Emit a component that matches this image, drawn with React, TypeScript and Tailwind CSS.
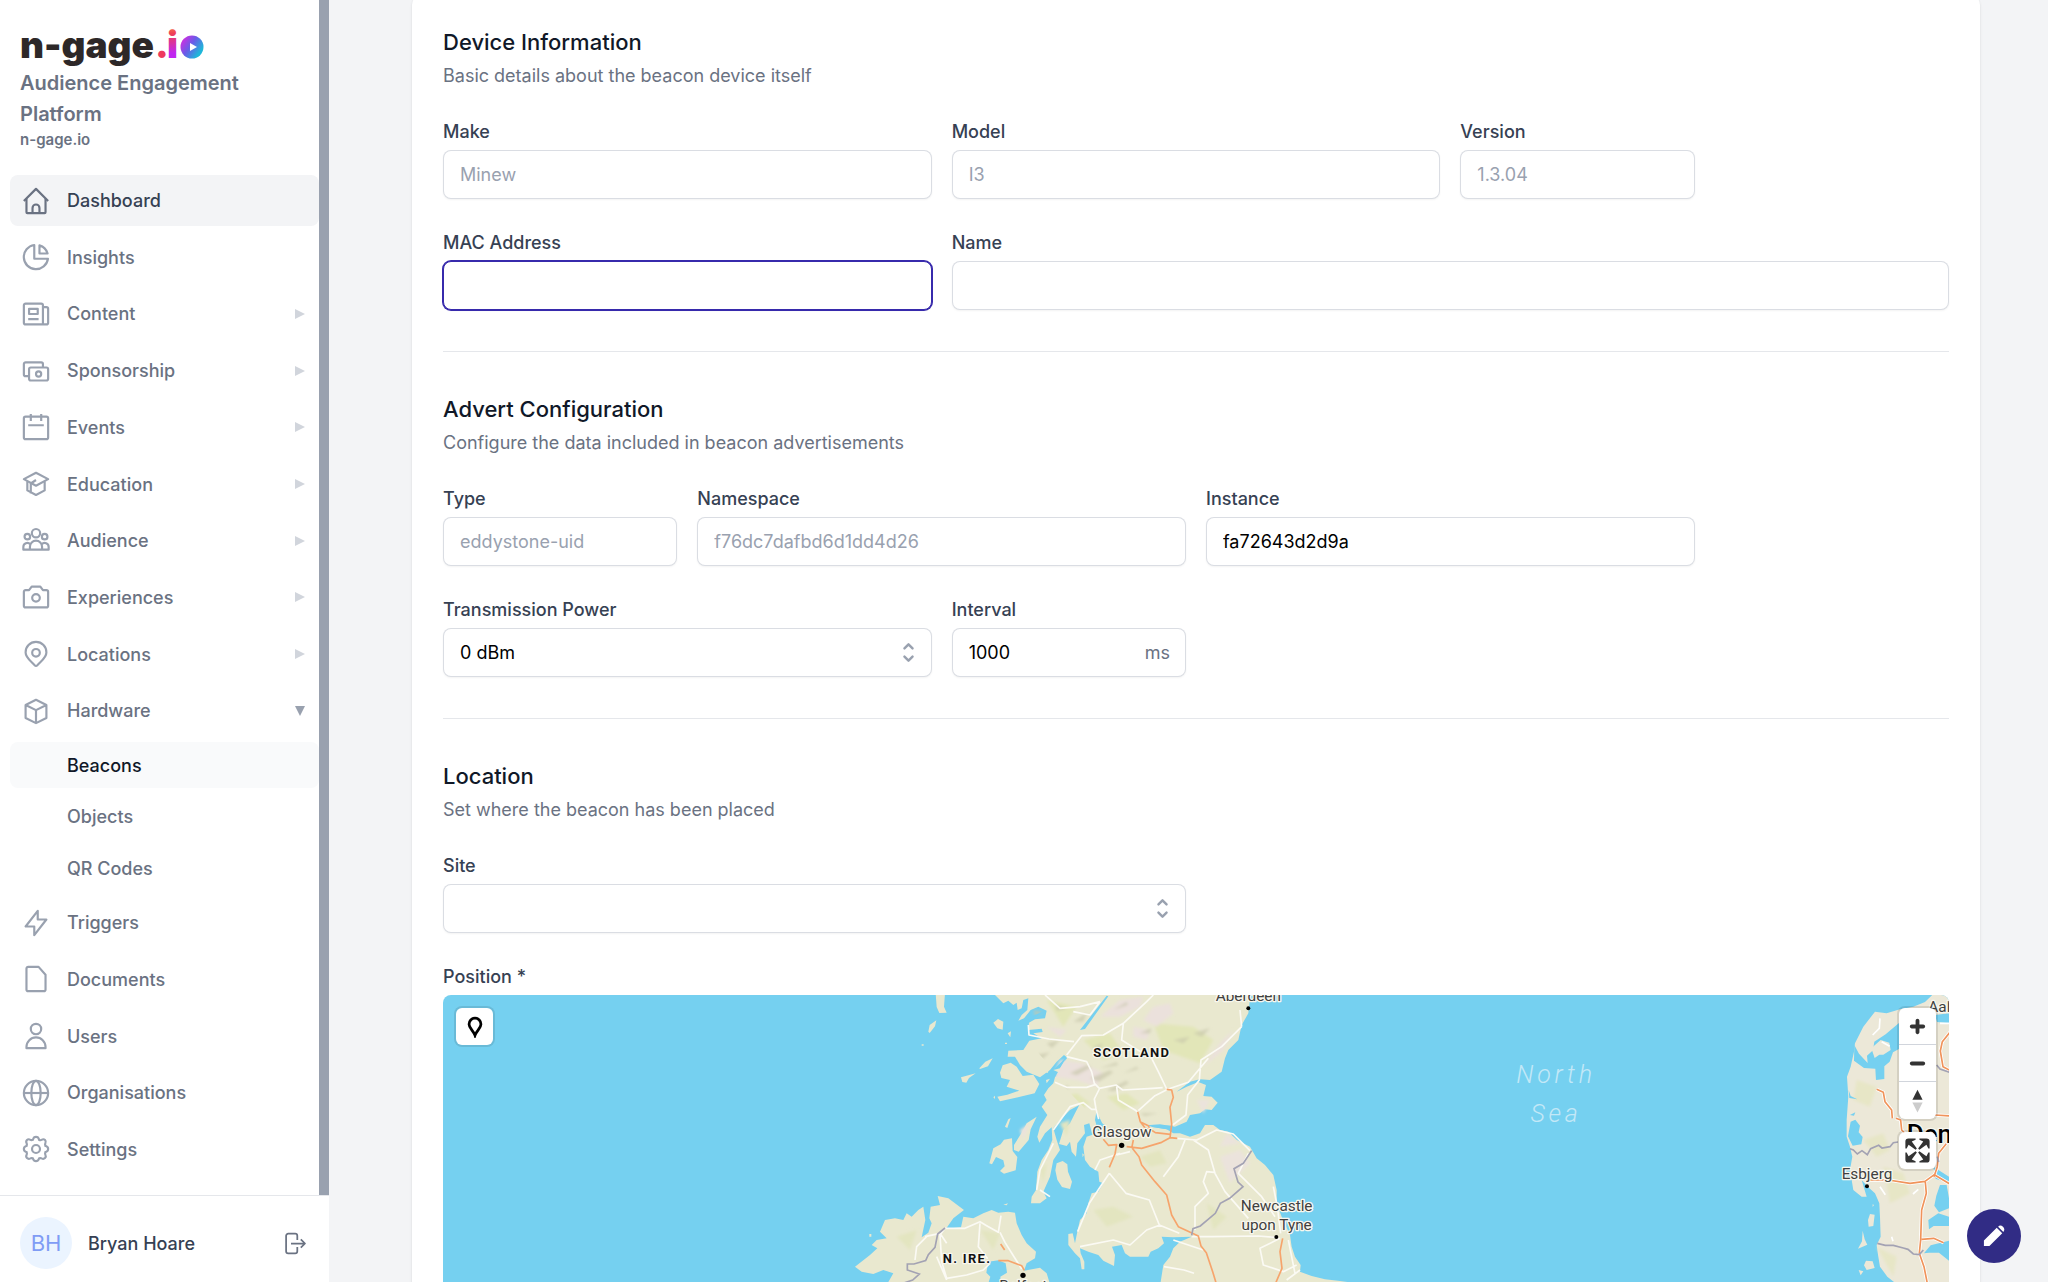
import { useState } from "react";
import type { ReactNode } from "react";

const icons: Record<string, ReactNode> = {
  home: (
    <>
      <path d="M.5 7.5l7-7 7 7" />
      <path d="M2 6v8a.5.5 0 00.5.5h10a.5.5 0 00.5-.5V6" />
      <path d="M5.5 14.5v-3a2 2 0 014 0v3" />
    </>
  ),
  pie: (
    <>
      <path d="M6.5.6a7 7 0 107.9 7.9H6.5V.6z" />
      <path d="M9.5.8v4.7h4.7A7 7 0 009.5.8z" />
    </>
  ),
  news: (
    <>
      <path d="M11.5 13.5h-10a1 1 0 01-1-1v-10a1 1 0 011-1h9a1 1 0 011 1v11zm0 0h2a1 1 0 001-1v-8a1 1 0 00-1-1h-2" />
      <path d="M3.5 4.5h5v3h-5zM3 10.5h6" />
    </>
  ),
  money: (
    <>
      <path d="M3.500 10.5h-2a1 1 0 01-1-1v-6a1 1 0 011-1h9a1 1 0 011 1v2" />
      <rect x="3.5" y="5.5" width="11" height="7.5" rx="1" />
      <circle cx="9" cy="9.2" r="1.5" />
    </>
  ),
  calendar: (
    <>
      <rect x=".5" y="1.5" width="14" height="13" rx="1" />
      <path d="M4.5 0v4M10.5 0v4M3 6.5h9" />
    </>
  ),
  education: (
    <>
      <path d="M.5 4.7L7.5 1l7 3.7-7 3.8-7-3.800z" />
      <path d="M2.500 6v5.2l5 2.600 5-2.600V6M4.500 13V7.200l3-2" />
    </>
  ),
  audience: (
    <>
      <circle cx="7.5" cy="3" r="2.4" />
      <circle cx="2.5" cy="5" r="1.6" />
      <circle cx="12.5" cy="5" r="1.6" />
      <path d="M4 12.5v-1.700a3.500 3.500 0 017 0v1.700H.2v-1.500a2.300 2.300 0 014-1.600M11 12.500h3.800v-1.500a2.300 2.300 0 00-4-1.600" />
    </>
  ),
  camera: (
    <>
      <path d="M.5 12.5v-8a1 1 0 011-1h2l1.500-2h5l1.500 2h2a1 1 0 011 1v8a1 1 0 01-1 1h-12a1 1 0 01-1-1z" />
      <circle cx="7.5" cy="8" r="2.2" />
    </>
  ),
  pin: (
    <>
      <path d="M7.5.5a6 6 0 00-6 6.200c0 3.300 3.600 5.200 5.300 7.400a.9.9 0 001.400 0c1.700-2.200 5.300-4.100 5.300-7.400a6 6 0 00-6-6.200z" />
      <circle cx="7.5" cy="6.8" r="2.2" />
    </>
  ),
  box: <path d="M7.5 7l-6-3m6 3l6-3m-6 3v7.5M1.500 4l6-3 6 3v7.500l-6 3-6-3V4z" />,
  bolt: <path d="M8.500 5.500v-5l-7 9h5v5l7-9h-5z" />,
  file: <path d="M2 1.500v12a1 1 0 001 1h9a1 1 0 001-1V5L9 .5H3a1 1 0 00-1 1z" />,
  user: (
    <>
      <circle cx="7.5" cy="3.5" r="3" />
      <path d="M2 14.5v-.7a5.500 5.500 0 0111 0v.7H2z" />
    </>
  ),
  globe: (
    <>
      <circle cx="7.5" cy="7.5" r="7" />
      <ellipse cx="7.5" cy="7.5" rx="2.7" ry="7" />
      <path d="M.5 7.5h14" />
    </>
  ),
  cog: (
    <>
      <path d="M6 1.400C6.200.8 6.700.5 7.500.5s1.300.3 1.500.9l.3.9c.6.2 1 .3 1.400-.1 1-.6 1.500-.4 2 .1s.7 1 .2 1.900c-.3.6-.2.9 0 1.500.7.3 1.600.4 1.600 1.800s-.8 1.500-1.600 1.800c-.2.6-.3 1 0 1.500.5.9.3 1.400-.2 1.900s-1 .7-2 .2c-.5-.3-.8-.2-1.400 0-.3.7-.4 1.600-1.800 1.600s-1.500-.8-1.800-1.600c-.6-.2-.9-.3-1.400 0-1 .5-1.500.3-2-.2s-.7-1-.2-1.900c.3-.5.2-.9 0-1.500C1.300 9 .5 8.900.5 7.500S1.300 6 2.100 5.700c.2-.6.3-.9 0-1.500-.5-.9-.3-1.400.2-1.900s1-.7 2-.1c.5.3.8.2 1.400 0z" />
      <circle cx="7.5" cy="7.5" r="2.3" />
    </>
  ),
  logout: (
    <path d="M9.5 5V2A1.500 1.500 0 008 .5H3A1.500 1.500 0 001.500 2v11A1.500 1.500 0 003 14.500h5A1.500 1.500 0 009.500 13v-3M5 7.500h10M12 4.500l3 3-3 3" />
  ),
};

const Icon = ({ name, className }: { name: string; className: string }) => (
  <svg
    viewBox="0 0 15 15"
    fill="none"
    stroke="currentColor"
    strokeWidth="1.25"
    strokeLinejoin="round"
    className={`shrink-0 overflow-visible ${className}`}
    aria-hidden="true"
  >
    {icons[name]}
  </svg>
);

const menu = [
  { label: "Dashboard", icon: "home", active: true },
  { label: "Insights", icon: "pie" },
  { label: "Content", icon: "news", more: true },
  { label: "Sponsorship", icon: "money", more: true },
  { label: "Events", icon: "calendar", more: true },
  { label: "Education", icon: "education", more: true },
  { label: "Audience", icon: "audience", more: true },
  { label: "Experiences", icon: "camera", more: true },
  { label: "Locations", icon: "pin", more: true },
  { label: "Hardware", icon: "box", open: true },
  { label: "Beacons", sub: true, active: true },
  { label: "Objects", sub: true },
  { label: "QR Codes", sub: true },
  { label: "Triggers", icon: "bolt" },
  { label: "Documents", icon: "file" },
  { label: "Users", icon: "user" },
  { label: "Organisations", icon: "globe" },
  { label: "Settings", icon: "cog" },
];

const Logo = () => (
  <svg viewBox="0 0 186 48" className="block h-[48px] w-[186px] overflow-visible" role="img" aria-label="n-gage.io">
    <defs>
      <linearGradient id="logoI" x1="0" y1="0" x2="0.3" y2="1">
        <stop offset="0.2" stopColor="#fbb040" />
        <stop offset="0.5" stopColor="#ef4056" />
        <stop offset="0.9" stopColor="#c026f0" />
      </linearGradient>
      <linearGradient id="logoO" x1="0" y1="0" x2="1" y2="0.7">
        <stop offset="0.1" stopColor="#d62be0" />
        <stop offset="0.5" stopColor="#6a5be8" />
        <stop offset="0.9" stopColor="#1fb6d9" />
      </linearGradient>
    </defs>
    <text y="38" fontSize="37" className="font-['Inter'] font-black">
      <tspan x="0" fill="#2d2828">n-gage</tspan>
      <tspan x="135" fill="#ee3a5f">.</tspan>
      <tspan x="147" fill="url(#logoI)">i</tspan>
    </text>
    <circle cx="172" cy="27" r="11.5" fill="url(#logoO)" />
    <path d="M170 23l7 4-7 4z" fill="#fff" />
  </svg>
);

const Sidebar = () => (
  <aside className="flex h-full w-[329px] shrink-0 flex-col bg-white">
    <div className="flex min-h-0 flex-1">
      <div className="flex min-w-0 flex-1 flex-col py-5">
        <div className="flex flex-col px-5 pb-[25px]">
          <Logo />
          <span className="text-[20px] leading-[31px] font-semibold text-gray-500">Audience Engagement Platform</span>
          <span className="text-[15px] leading-5 font-semibold text-gray-500">n-gage.io</span>
        </div>
        {/* MENU */}
        <nav className="flex min-h-0 flex-1 flex-col justify-between pl-[10px]">
          {menu.map((item) =>
            item.sub ? (
              <a
                key={item.label}
                href="#"
                className={`flex h-[46px] items-center rounded-lg pl-[57px] text-[18px] font-medium ${
                  item.active ? "bg-gray-50 text-gray-900" : "text-gray-500"
                }`}
              >
                {item.label}
              </a>
            ) : (
              <a
                key={item.label}
                href="#"
                className={`flex h-[51px] items-center gap-[18px] rounded-lg pl-[13px] pr-[14px] text-[18px] font-medium ${
                  item.active ? "bg-gray-100 text-gray-700" : "text-gray-500"
                }`}
              >
                <Icon name={item.icon!} className={`size-[26px] ${item.active ? "text-gray-500" : "text-gray-400"}`} />
                <span className="flex-1">{item.label}</span>
                {item.more && (
                  <svg viewBox="0 0 10 10" className="size-[10px] fill-gray-300" aria-hidden="true">
                    <path d="M0 0l10 5-10 5z" />
                  </svg>
                )}
                {item.open && (
                  <svg viewBox="0 0 10 10" className="size-[10px] fill-gray-400" aria-hidden="true">
                    <path d="M0 0h10L5 10z" />
                  </svg>
                )}
              </a>
            ),
          )}
        </nav>
      </div>
      <div className="w-[10px] shrink-0 bg-gray-400" />
    </div>
    {/* USER */}
    <div className="flex h-[87px] shrink-0 items-start border-t border-gray-200 px-5 pt-[21px]">
      <div className="flex size-[52px] items-center justify-center rounded-full bg-[#ebf4ff] text-[22px] text-[#7f9cf5]">
        BH
      </div>
      <div className="ml-4 flex h-[52px] flex-1 items-center justify-between">
        <span className="text-[18px] font-medium text-gray-700">Bryan Hoare</span>
        <button type="button" aria-label="Log out" className="mr-1 text-gray-500">
          <Icon name="logout" className="size-[21px]" />
        </button>
      </div>
    </div>
  </aside>
);

const inputClass =
  "h-[49px] w-full rounded-lg border border-gray-300/80 bg-white px-4 text-[18px] text-black shadow-xs outline-none placeholder:text-gray-400";

type FieldProps = { id: string; label: string; span: string; children: ReactNode };

const Field = ({ id, label, span, children }: FieldProps) => (
  <div className={`flex flex-col gap-[5px] ${span}`}>
    <label htmlFor={id} className="text-[18px] leading-[26px] font-medium text-gray-700">
      {label}
    </label>
    {children}
  </div>
);

const Select = ({ id, options }: { id: string; options: string[] }) => (
  <div className="relative">
    <select id={id} className={`${inputClass} appearance-none`}>
      {options.map((option) => (
        <option key={option}>{option}</option>
      ))}
    </select>
    <svg
      viewBox="0 0 20 20"
      fill="none"
      stroke="currentColor"
      strokeWidth="1.8"
      strokeLinecap="round"
      strokeLinejoin="round"
      className="pointer-events-none absolute right-[10px] top-[11px] size-[27px] text-gray-400"
      aria-hidden="true"
    >
      <path d="M7 7l3-3 3 3m0 6l-3 3-3-3" />
    </svg>
  </div>
);

type SectionProps = { title: string; text: string; children: ReactNode };

const Section = ({ title, text, children }: SectionProps) => (
  <section className="border-b border-gray-200 py-[41px] first:pt-0 last:border-b-0">
    <h3 className="text-[22px] leading-[33px] font-medium text-gray-900">{title}</h3>
    <p className="mt-1 text-[18px] leading-[26px] text-gray-500">{text}</p>
    <div className="mt-[30px] grid grid-cols-6 gap-x-5 gap-y-[31px]">{children}</div>
  </section>
);

const MapArt = () => (
  <svg viewBox="0 0 1506 480" preserveAspectRatio="xMaxYMin slice" className="block h-full w-full bg-[#75d0f0]">
    <defs>
      <filter id="soft" x="-20%" y="-20%" width="140%" height="140%">
        <feGaussianBlur stdDeviation="5" />
      </filter>
      <clipPath id="mainland">
        <path d="M460 0L490 40 520 45 545 92 620 60 565 98 565 155 640 240 680 200 645 262 730 350 780 425 1000 430 1080 268 1155 205 1205 105 1235 0z" />
      </clipPath>
    </defs>
    {/* BRITISH ISLES */}
    <g transform="scale(0.33333) translate(1191 -15)">
      <g fill="#e9e8cf">
        <path d="M460 10L490 40 505 32 520 45 530 38 533 60 545 55 550 30 565 25 562 60 545 75 535 92 552 85 572 60 595 50 620 62 615 85 585 88 567 98 565 120 605 116 608 126 580 130 605 145 568 152 550 180 505 182 503 200 525 200 540 225 560 245 600 262 630 240 650 215 672 195 682 203 660 235 640 240 662 250 645 262 640 280 625 295 612 315 620 330 605 350 622 375 600 410 592 440 598 458 615 430 635 412 637 450 625 480 605 510 592 545 588 600 575 620 573 640 600 640 620 625 610 605 630 560 640 510 660 480 650 450 640 415 660 390 690 360 718 345 705 370 690 400 670 420 657 462 680 468 690 455 695 485 708 500 712 460 735 430 732 405 748 400 756 430 775 425 765 390 770 360 778 395 795 405 785 425 740 440 730 470 735 510 750 530 775 545 778 575 790 580 775 605 755 610 745 640 740 670 720 690 712 725 705 760 698 730 685 732 685 765 705 790 720 805 725 838 733 838 733 815 722 790 720 775 745 785 775 795 790 812 822 828 825 795 816 770 845 765 855 790 870 800 925 800 932 785 955 775 972 760 965 740 1000 742 1055 740 1020 755 1000 775 990 800 970 825 962 876 940 1400 2200 1400 1700 900 1500 873 1455 868 1415 858 1380 845 1382 825 1365 800 1355 770 1350 735 1325 680 1310 640 1310 600 1300 555 1275 525 1250 505 1230 470 1190 450 1165 425 1140 420 1120 405 1095 405 1080 430 1050 440 1020 430 1000 430 980 418 940 412 920 406 960 403 1005 410 1040 395 1050 375 1080 370 1095 358 1115 360 1133 338 1115 320 1090 318 1098 285 1075 276 1040 290 1010 305 1050 275 1080 268 1110 270 1145 245 1155 205 1165 180 1195 150 1205 105 1225 70 1232 10z" />
        <path d="M45 830L90 795 112 775 95 765 110 750 140 745 120 725 135 690 165 685 190 690 200 670 215 680 235 660 250 650 256 690 245 742 265 728 275 700 268 685 272 650 300 645 293 618 325 625 372 660 340 685 318 716 363 712 370 680 400 685 430 670 455 660 475 668 505 665 525 668 530 700 545 735 560 760 588 785 585 805 560 820 552 842 600 833 620 850 628 876 640 1400-100 1400 145 876 160 850 130 840 100 852 65 845z" />
        <path d="M650 520l18-7 14 10 2 22 12 30-6 22-24-6-14-22-6-28zM448 520l12-45 22-12 10-14 24-4 2 38 14 18-5 40-35 10-12-8 14-14-4-18-22-10-12 22zM522 465l22-35 16-30 30-20-18 38-6 32-30 35-14-5zM480 248l8-22 24-8 18 12 18 28 32-4 18 28-14 28-50 12-54 12-8-14 30-6 36-12-38-12 10-20-26-6zM495 410l10-22 7-4-10 30zM363 262l22-6 22-6-20 14-8 14-12-2zM418 235l18-20 22-10-14 24-24 8zM287 10h28l-3 40 8 18-22 1-8-18zM265 125l4-20 20-14-4 18-16 20zM460 98l14-11 16 8-2 24-16-4zM503 130l10-6-2 18zM495 158h6v4h-6zM245 163h6v4h-6zM618 270l12-4-10 14zM618 248l8-10-2 10zM460 322l5-5v10zM490 644l14-4-4 6zM727 490l5 4-4 8zM88 732h6v8h-6z" />
      </g>
      {/* HILLS */}
      <g clipPath="url(#mainland)" filter="url(#soft)">
        <path d="M620 30l90 20-40 60zM730 150l80-20 40 60-60 20zM940 100l120 10 60 40-40 70-110-40zM650 330l60-20 40 30-60 40zM800 320l60-10 40 30-50 20z" fill="#e2e6b8" />
        <path d="M660 210l70 10 60 30-20 40-60-20-70-10zM780 80l60-50 70-10-10 30-60 30zM910 90l30-40 50-10 10 30-50 40zM880 110l50 10-10 30-40-10zM1090 230l60-50 30-60-40 40zM620 110l60 10-20 20z" fill="#ebe1dc" />
        <path d="M690 250l50-24 14 6-44 24zM750 265l60-24 10 6-44 28zM800 300l60-28 6 8-44 24zM780 235l50-18 4 8zM850 250l40-20 6 6zM645 45l36 10-30 8zM580 60l30 6-24 14zM700 95l40-26-10 26zM620 160l40-10-24 24zM900 130l34-16-4 16zM1000 150l50-10-20 20zM1060 130l50-16-24 26zM760 170l30-10-10 16zM900 370h54l-40 8zM590 195l40-8-24 20zM820 60l40-24 4 8zM660 300l24-14 4 8z" fill="#c9c7ab" opacity=".7" />
      </g>
      <g fill="#e3e5c0" filter="url(#soft)">
        <path d="M900 500l60-20 20 40-50 10zM760 660l60-10 60 30-80 30zM1100 640l60 40-40 40zM170 740l60-20-20 60zM420 720l60 10-20 50zM660 400l30-10-10 50zM600 540l20-20-10 60z" />
        <path d="M1140 500l60-20 30 40-60 60zM1070 330l40 0-20 40zM1160 430l40 30-60 10zM540 420l30-20-20 50z" fill="#ebe3dc" />
      </g>
      <path d="M445 815l30-4 22 9 4 28-20 12 2 20-38 0 6-20-12-12zM720 120l80-103 5 2-70 98zM775 375l14 30-10 2zM940 405l60 2-10 12-50-8z" fill="#75d0f0" />
      {/* ROADS */}
      <g fill="none" stroke="#fbfaf4" strokeWidth="5" strokeLinejoin="round">
        <path d="M565 105l2 30 60 12 75 8M780 35l-60 15-60 5-45-40M780 35l-30 40-50-10M680 195l45-58 65-2 60-35 70-65 20-20M850 100l-5 50 40 25 50 30 20 40 25 52M680 200l60 15 15 30 8 35 15 15 50-10 20 15 90-5 30-2M645 277l35 15 60 0 25-8M778 297l-15 30 5 30 8 30M830 290l5 40 50 30 10 8M895 362l50-45 40-20M985 297l60-20 60-72M1205 110l-60 60-62 40-5 60-35 45-5 60-40 30M1200 60l5 50M640 420l50-70 40-12 25 20 12 0M1010 445l60 5 60-30 50 12 50 50M1060 450l45 30 20 70 30 55 70 80M970 560l45-60 20-50M1225 490l-30 60 70 70 40 60M1300 590l12 60 10 80M840 490l-60 20-15 30M870 485l-40 10M808 550l50 60 70 20 30 75 60 25M808 550l-60 90-35 85M960 705l-40 15-50 45-50-15-100 20M1055 740l60 0 140-2 60 5M1065 720l0-70 40-40-15-35 10-30 22 2M1090 780l-90-30M972 830l60 10 30 10M315 715l60 0 45-20 20 12 35 20 8-50M420 700l-5 70 28 36M260 740l-30 30-5 40M300 730l-45 10M300 730l20 30M315 715l-15 20 5 80 15 50 60-10 50-15 20-20M480 727l15 30 50 80M290 800l30 70M1320 745l-60 30 10 50 60 20 40-20M1345 750l10 50 10 50M600 600l30 20M1340 870l40-30M590 600l10-60 40-80" />
      </g>
      <g fill="none" stroke="#f6a46c" strokeWidth="5" strokeLinejoin="round">
        <path d="M980 298l15 2 5 22-10 30 5 50-5 42M893 365l8 30 15 20 18 5 12 8 45 5M900 395l25 12 8 16M790 448l15 18 25-2-5 28-17 40M860 470l45 5 60-18 25-14 22 2M875 475l5-25M877 475l20 25 8 25 40 50 35 40 15 60 20 35 60 28 8 30 16 20 20 60 15 50M475 812l30 0 40 15 8 14M482 762l12 18M1328 745l-8 40 6 50-18 42" />
      </g>
      <g fill="none" stroke="#a3a2b3" strokeWidth="5">
        <path d="M1235 482l-25 38-28 16 12 40 15 14-40 35-28 15-15 30-45 38-22 8-4 20M315 714l-22 18-8 40-20 22-8 18-35 10-20 0 0 18 36 12-20 18-35 12" />
      </g>
      <g
        className="font-['Roboto']"
        fill="#404040"
        stroke="#f8f7ee"
        strokeWidth="8"
        paintOrder="stroke"
        strokeLinejoin="round"
        textAnchor="middle"
        fontSize="46"
      >
        <text x="1225" y="34">Aberdeen</text>
        <text x="846" y="442">Glasgow</text>
        <text x="1310" y="664">Newcastle</text>
        <text x="1310" y="720">upon Tyne</text>
        <text x="550" y="902">Belfast</text>
        <g className="font-bold tracking-widest" fill="#111" fontSize="39">
          <text x="875" y="201">SCOTLAND</text>
          <text x="381" y="818">N. IRE.</text>
        </g>
      </g>
      <circle cx="1225" cy="55" r="6" />
      <circle cx="845" cy="466" r="8" />
      <circle cx="1309" cy="741" r="6" />
      <circle cx="549" cy="856" r="8" />
    </g>
    <g
      className="font-['Roboto'] font-light tracking-[0.15em] italic"
      fill="#c3e8f7"
      fontSize="25"
      textAnchor="middle"
    >
      <text x="1113" y="88">North</text>
      <text x="1113" y="127">Sea</text>
    </g>
    {/* DENMARK */}
    <g transform="scale(0.33333) translate(4071 -45)">
      <path d="M402 40L600 40 600 1400 300 1400 282 906 262 890 240 860 235 830 230 795 242 770 240 710 238 670 225 640 205 622 185 600 200 650 185 650 160 630 150 570 157 530 150 500 140 470 140 420 145 350 141 290 152 260 162 215 165 190 190 140 225 95 260 100 300 88 340 80 375 66z" fill="#ece8d8" />
      <path d="M170 300l60 20-20 60-50-20zM190 480l60-20 20 50-40 20zM250 560l60 20 20 60-60 30zM230 800l60 30-10 60z" fill="#e7e6c6" filter="url(#soft)" />
      <path d="M163 195l14 26 26 28-2-22 18-16 4-26 34-22 40-34 12 16-8 60-22 12-10 28-16 14 0 38-25 3-2-34-34-2-30-22zM152 425l14-6 14 18-4 20 12 14-4 22-26 4-14-28zM146 330l6 18 20 10-24-4zM150 405l16-8-4 10zM405 105l42-5v30l-36-4zM400 560l47 30v20l-40-14zM420 615l20 0 7 40v30l-30 12-14-20 6-30zM385 720l30-20 32 10v28l-46 0-14 10zM372 820l20-24 55-14v60l-30-24-30 0z" fill="#75d0f0" />
      <path d="M214 205l28-25 26 8 4 22-22 14-12 0-14 10zM210 702l14 2-4 34-14 2-2-20zM188 752l6 26 8 16-28 12 12-22zM198 842l20 2 6 20-24 6-8-14zM176 870l14 4-8 12zM222 675l-4 6 0-8z" fill="#ece8d8" />
      <path d="M240 115l-2 30-20 20M245 185l24 14M240 620l16 24M355 628l-16 14M275 770l4 14M420 130l27 0" fill="none" stroke="#fff" strokeWidth="5" />
      <path
        d="M230 328l20 9 5 28 20 25 2 25M288 415l14 5 3 30 16 16M405 405l50 3M205 600l60 0 65 10 45-6 28-20 50 30M376 606l3 34-14 50-3 90-4 40 14 40 12 60M455 150l-28 35-6 28 8 47 26 14M365 778l36-3 30 13M440 490l-24 30-4 40-10 30"
        fill="none"
        stroke="#fff"
        strokeWidth="10"
      />
      <path
        d="M230 328l20 9 5 28 20 25 2 25M288 415l14 5 3 30 16 16M405 405l50 3M205 600l60 0 65 10 45-6 28-20 50 30M376 606l3 34-14 50-3 90-4 40 14 40 12 60M455 150l-28 35-6 28 8 47 26 14M365 778l36-3 30 13M440 490l-24 30-4 40-10 30"
        fill="none"
        stroke="#f0935a"
        strokeWidth="5"
        strokeLinejoin="round"
      />
      <path d="M150 506l10 4 12 12 14-10 16 12 10-18 24-10 10 8 24-4 10-12 14-2M410 255l10 12 30 10M412 530l4 16M232 790l24 6 24 0 30 8 14 4 16 14 18 2 12-14" fill="none" stroke="#a3a2b3" strokeWidth="5" />
      <g
        className="font-['Roboto']"
        fill="#404040"
        stroke="#f8f7ee"
        strokeWidth="8"
        paintOrder="stroke"
        strokeLinejoin="round"
        fontSize="46"
      >
        <text x="385" y="97">Aalborg</text>
        <text x="125" y="598">Esbjerg</text>
        <text x="320" y="490" fontSize="78" fill="#000" className="font-medium">
          Denmark
        </text>
      </g>
      <circle cx="201" cy="619" r="6" />
    </g>
  </svg>
);

const controlPaths: Record<string, string> = {
  "Zoom in":
    "M14.5 8.5c-.75 0-1.500.75-1.500 1.500v3h-3c-.75 0-1.500.75-1.500 1.500S9.250 16 10 16h3v3c0 .75.75 1.500 1.500 1.500S16 19.750 16 19v-3h3c.75 0 1.500-.75 1.500-1.500S19.750 13 19 13h-3v-3c0-.75-.75-1.500-1.500-1.500z",
  "Zoom out": "M10 13c-.75 0-1.500.75-1.500 1.500S9.250 16 10 16h9c.75 0 1.500-.75 1.500-1.500S19.750 13 19 13h-9z",
  "Reset bearing": "M10.5 14l4-8 4 8h-8z",
  "Enter fullscreen":
    "M24 16v5.500c0 1.750-.75 2.500-2.500 2.500H16v-1l3-1.500-4-5.500 1-1 5.500 4 1.500-3h1zM6 16l1.500 3 5.500-4 1 1-4 5.500 3 1.500v1H7.500C5.750 24 5 23.250 5 21.500V16h1zm7-11v1l-3 1.500 4 5.500-1 1-5.500-4L6 13H5V7.500C5 5.750 5.750 5 7.500 5H13zm11 2.500c0-1.750-.75-2.500-2.500-2.500H16v1l3 1.500-4 5.500 1 1 5.500-4 1.500 3h1V7.500z",
};

const MapButton = ({ name }: { name: string }) => (
  <button type="button" aria-label={name} className="flex size-[37px] items-center justify-center">
    <svg viewBox="0 0 29 29" className="size-[37px] fill-[#333]" aria-hidden="true">
      <path d={controlPaths[name]} />
      {name === "Reset bearing" && <path d="M10.5 16l4 8 4-8h-8z" fill="#ccc" />}
    </svg>
  </button>
);

const PositionMap = () => (
  <div className="relative h-[480px] overflow-hidden rounded-lg">
    <MapArt />
    <button
      type="button"
      aria-label="Place marker"
      className="absolute left-[13px] top-[13px] flex size-[37px] items-center justify-center rounded-md bg-white ring-2 ring-black/10"
    >
      <svg viewBox="0 0 20 20" fill="none" stroke="#000" strokeWidth="2.5" className="size-[22px]" aria-hidden="true">
        <path d="M10 2C6.800 2 4.600 4.400 4.600 7.400c0 3.600 3.800 5.600 5.400 10.200 1.600-4.600 5.400-6.600 5.400-10.200C15.400 4.400 13.200 2 10 2z" />
      </svg>
    </button>
    <div className="absolute right-[13px] top-[13px] flex flex-col gap-[13px]">
      <div className="divide-y divide-gray-300 rounded-md bg-white ring-2 ring-black/10">
        <MapButton name="Zoom in" />
        <MapButton name="Zoom out" />
        <MapButton name="Reset bearing" />
      </div>
      <div className="rounded-md bg-white ring-2 ring-black/10">
        <MapButton name="Enter fullscreen" />
      </div>
    </div>
  </div>
);

const App = () => {
  const [mac, setMac] = useState("");
  const [name, setName] = useState("");
  const [instance, setInstance] = useState("fa72643d2d9a");
  const [interval, setInterval] = useState("1000");

  return (
    <div className="flex h-screen overflow-hidden bg-gray-100 font-['Inter',sans-serif]">
      <Sidebar />
      <main className="min-w-0 flex-1 overflow-hidden pl-[83px] pr-[68px]">
        <form className="-mt-[5px] rounded-[10px] bg-white p-[31px] shadow-sm">
          <Section title="Device Information" text="Basic details about the beacon device itself">
            <Field id="make" label="Make" span="col-span-2">
              <input id="make" placeholder="Minew" className={inputClass} />
            </Field>
            <Field id="model" label="Model" span="col-span-2">
              <input id="model" placeholder="I3" className={inputClass} />
            </Field>
            <Field id="version" label="Version" span="col-span-1">
              <input id="version" placeholder="1.3.04" className={inputClass} />
            </Field>
            <Field id="mac" label="MAC Address" span="col-span-2 col-start-1">
              <input
                id="mac"
                value={mac}
                onChange={(e) => setMac(e.target.value)}
                className={`${inputClass} border-indigo-800! ring-1 ring-indigo-800`}
              />
            </Field>
            <Field id="name" label="Name" span="col-span-4">
              <input id="name" value={name} onChange={(e) => setName(e.target.value)} className={inputClass} />
            </Field>
          </Section>

          <Section title="Advert Configuration" text="Configure the data included in beacon advertisements">
            <Field id="type" label="Type" span="col-span-1">
              <input id="type" placeholder="eddystone-uid" className={inputClass} />
            </Field>
            <Field id="namespace" label="Namespace" span="col-span-2">
              <input id="namespace" placeholder="f76dc7dafbd6d1dd4d26" className={inputClass} />
            </Field>
            <Field id="instance" label="Instance" span="col-span-2">
              <input
                id="instance"
                value={instance}
                onChange={(e) => setInstance(e.target.value)}
                className={inputClass}
              />
            </Field>
            <Field id="power" label="Transmission Power" span="col-span-2 col-start-1">
              <Select id="power" options={["0 dBm"]} />
            </Field>
            <Field id="interval" label="Interval" span="col-span-1">
              <div className="relative">
                <input
                  id="interval"
                  value={interval}
                  onChange={(e) => setInterval(e.target.value)}
                  className={inputClass}
                />
                <span className="pointer-events-none absolute inset-y-0 right-4 flex items-center text-[18px] text-gray-500">
                  ms
                </span>
              </div>
            </Field>
          </Section>

          <Section title="Location" text="Set where the beacon has been placed">
            <Field id="site" label="Site" span="col-span-3">
              <Select id="site" options={[""]} />
            </Field>
            <div className="col-span-6 flex flex-col gap-[5px]">
              <span className="text-[18px] leading-[26px] font-medium text-gray-700">Position *</span>
              <PositionMap />
            </div>
          </Section>
        </form>
      </main>

      <button
        type="button"
        aria-label="Edit"
        className="fixed bottom-[19px] right-[27px] flex size-[54px] items-center justify-center rounded-full bg-indigo-900"
      >
        <svg viewBox="0 0 24 24" className="size-[22px] fill-white" aria-hidden="true">
          <path d="M1 23v-6L15 3l6 6L7 23zM16.500 1.800C18 .2 20 .3 21.800 2s2 3.900.4 5.500z" />
        </svg>
      </button>
    </div>
  );
};

export default App;
